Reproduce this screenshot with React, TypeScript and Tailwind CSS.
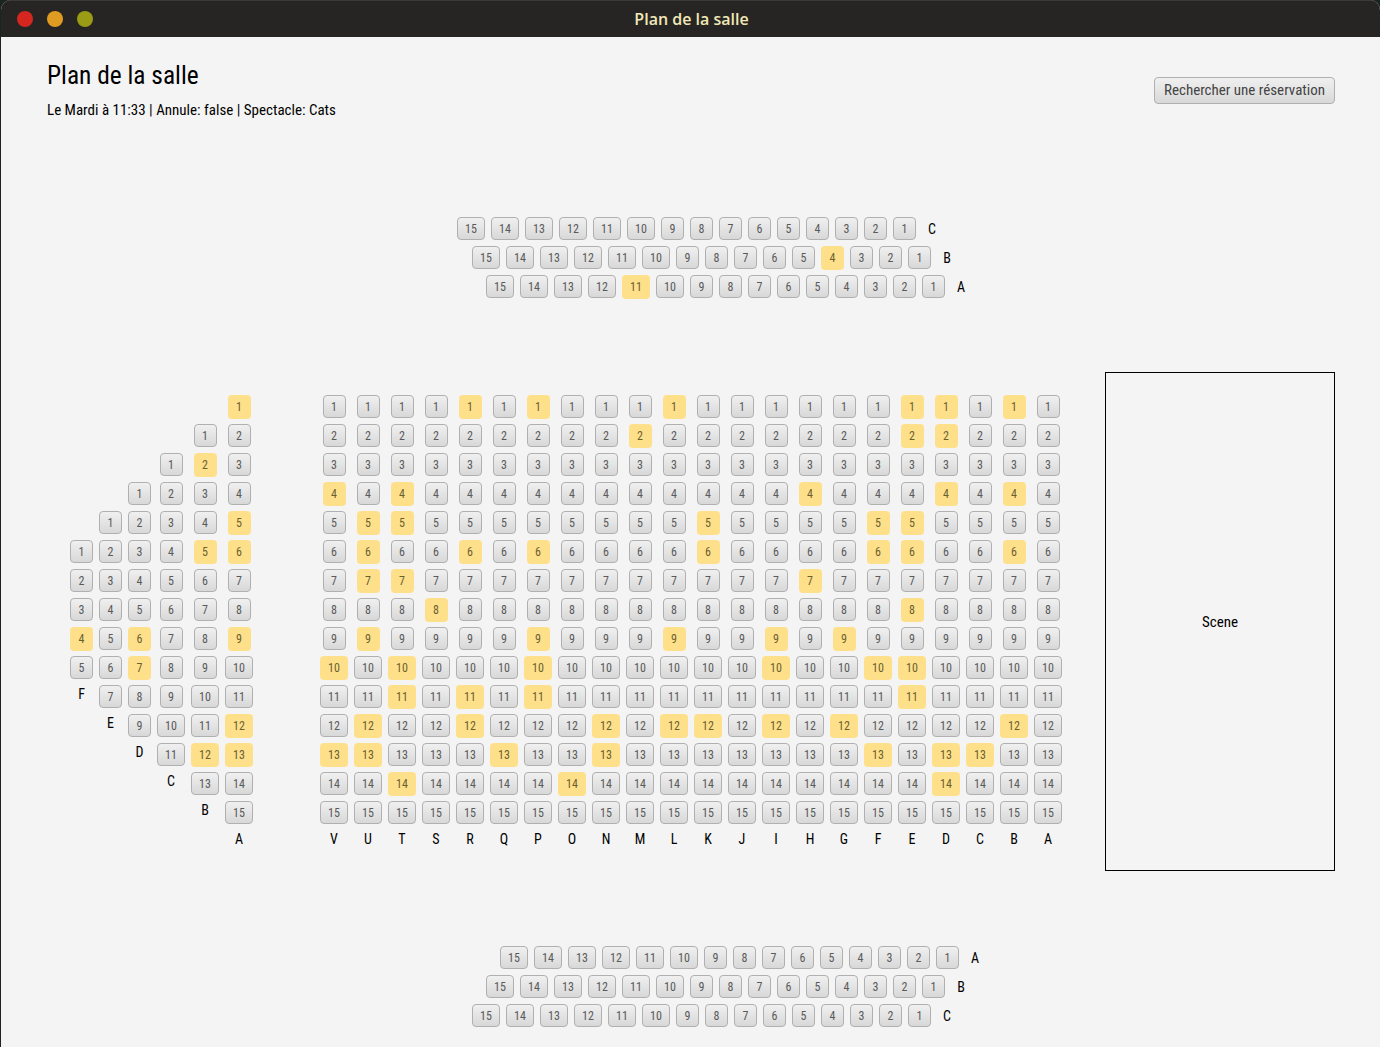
type SeatProps = { n: number; taken?: boolean };

const Seat = ({ n, taken }: SeatProps) => {
  const width = n >= 10 ? "w-[28px]" : "w-[23px]";
  return taken ? (
    <div
      className={`${width} h-[24px] flex items-center justify-center rounded-[4px] bg-[#fee08b] text-[12px] text-[#6b5f30]`}
    >
      {n}
    </div>
  ) : (
    <div
      className={`${width} h-[23px] flex items-center justify-center rounded-[4px] border border-[#b0b0b0] bg-linear-to-b from-[#f0f0f0] to-[#d8d8d8] text-[12px] text-[#5a5a5a]`}
    >
      {n}
    </div>
  );
};

const Cell = ({ n, taken, wide }: SeatProps & { wide: boolean }) => (
  <div
    className={`${wide ? "w-[34px]" : "w-[29px]"} h-[29px] flex justify-center items-start`}
  >
    <Seat n={n} taken={taken} />
  </div>
);

const Label = ({ text }: { text: string }) => (
  <div className="h-[18px] flex items-center justify-center text-[14px] leading-none text-black">
    {text}
  </div>
);

type SideColumn = { name: string; count: number; skip: number; wide: boolean; taken: number[] };

const sideColumns: SideColumn[] = [
  { name: "F", count: 5, skip: 5, wide: false, taken: [4] },
  { name: "E", count: 7, skip: 4, wide: false, taken: [] },
  { name: "D", count: 9, skip: 3, wide: false, taken: [6, 7] },
  { name: "C", count: 11, skip: 2, wide: true, taken: [] },
  { name: "B", count: 13, skip: 1, wide: true, taken: [2, 5, 12] },
  { name: "A", count: 15, skip: 0, wide: true, taken: [1, 5, 6, 9, 12, 13] },
];

const mainColumns: { name: string; taken: number[] }[] = [
  { name: "V", taken: [4, 10, 13] },
  { name: "U", taken: [5, 6, 7, 9, 12, 13] },
  { name: "T", taken: [4, 5, 7, 10, 11, 14] },
  { name: "S", taken: [8] },
  { name: "R", taken: [1, 6, 11, 12] },
  { name: "Q", taken: [13] },
  { name: "P", taken: [1, 6, 9, 10, 11] },
  { name: "O", taken: [14] },
  { name: "N", taken: [12, 13] },
  { name: "M", taken: [2] },
  { name: "L", taken: [1, 9, 12] },
  { name: "K", taken: [5, 6, 12] },
  { name: "J", taken: [] },
  { name: "I", taken: [9, 10, 12] },
  { name: "H", taken: [4, 7] },
  { name: "G", taken: [9, 12] },
  { name: "F", taken: [5, 6, 10, 13] },
  { name: "E", taken: [1, 2, 5, 6, 8, 10, 11] },
  { name: "D", taken: [1, 2, 4, 13, 14] },
  { name: "C", taken: [13] },
  { name: "B", taken: [1, 4, 6, 12] },
  { name: "A", taken: [] },
];

const range = (count: number) => Array.from({ length: count }, (_, i) => i + 1);

const SeatColumn = ({ name, count, skip = 0, wide = true, taken }: {
  name: string;
  count: number;
  skip?: number;
  wide?: boolean;
  taken: number[];
}) => (
  <div className={wide ? "w-[34px]" : "w-[29px]"}>
    {skip > 0 && range(skip).map((i) => <div key={i} className="h-[29px]" />)}
    {range(count).map((n) => (
      <Cell key={n} n={n} wide={wide} taken={taken.includes(n)} />
    ))}
    <Label text={name} />
  </div>
);

const BalconyRow = ({ name, offset, taken }: { name: string; offset: string; taken?: number }) => (
  <div className={`flex ${offset}`}>
    {range(15)
      .reverse()
      .map((n) => (
        <Cell key={n} n={n} wide={n >= 10} taken={n === taken} />
      ))}
    <div className="w-[26px] h-[23px] flex items-center justify-center text-[14px] leading-none text-black">
      {name}
    </div>
  </div>
);

export default function App() {
  return (
    <div className="w-[1380px] h-[1047px] overflow-hidden bg-[#1c2422] pl-px font-['Roboto',sans-serif] font-stretch-condensed">
      <div className="h-full rounded-t-[10px] overflow-hidden bg-[#f4f4f4]">
        <div className="h-[37px] grid grid-cols-[1fr_auto_1fr] items-center bg-[#262523] border-t border-[#3b3a38] pl-[16px] pr-[14px]">
          <div className="flex gap-[14px]">
            <span className="w-4 h-4 rounded-full bg-[#d5271f]" />
            <span className="w-4 h-4 rounded-full bg-[#e09c22]" />
            <span className="w-4 h-4 rounded-full bg-[#999c14]" />
          </div>
          <div className="font-['Open_Sans',sans-serif] font-semibold font-stretch-normal text-[16px] text-[#f2e8b8]">
            Plan de la salle
          </div>
          <div />
        </div>

        <div className="pl-[46px] pr-[45px]">
          <div className="flex justify-between items-start pt-[23px]">
            <div>
              <h1 className="text-[25.4px] leading-[30px] text-black">Plan de la salle</h1>
              <p className="mt-[10px] text-[15px] leading-5 text-black">
                Le Mardi à 11:33 | Annule: false | Spectacle: Cats
              </p>
            </div>
            <button className="mt-[17px] h-[27px] w-[181px] rounded-[4px] border border-[#b0b0b0] bg-linear-to-b from-[#f0f0f0] to-[#d8d8d8] text-[15px] text-[#444444]">
              Rechercher une réservation
            </button>
          </div>

          <div className="mt-[97px]">
            <BalconyRow name="C" offset="ml-[407px]" />
            <BalconyRow name="B" offset="ml-[422px]" taken={4} />
            <BalconyRow name="A" offset="ml-[436px]" taken={11} />
          </div>

          <div className="mt-[68px] flex items-center">
            <div className="ml-[20px] flex">
              {sideColumns.map((col) => (
                <SeatColumn key={col.name} {...col} />
              ))}
            </div>
            <div className="ml-[61px] flex">
              {mainColumns.map((col) => (
                <SeatColumn key={col.name} name={col.name} count={15} taken={col.taken} />
              ))}
            </div>
            <div className="ml-[40px] w-[230px] h-[499px] pt-[2px] flex items-center justify-center border border-black text-[15px] text-black">
              Scene
            </div>
          </div>

          <div className="mt-[75px]">
            <BalconyRow name="A" offset="ml-[450px]" />
            <BalconyRow name="B" offset="ml-[436px]" />
            <BalconyRow name="C" offset="ml-[422px]" />
          </div>
        </div>
      </div>
    </div>
  );
}
